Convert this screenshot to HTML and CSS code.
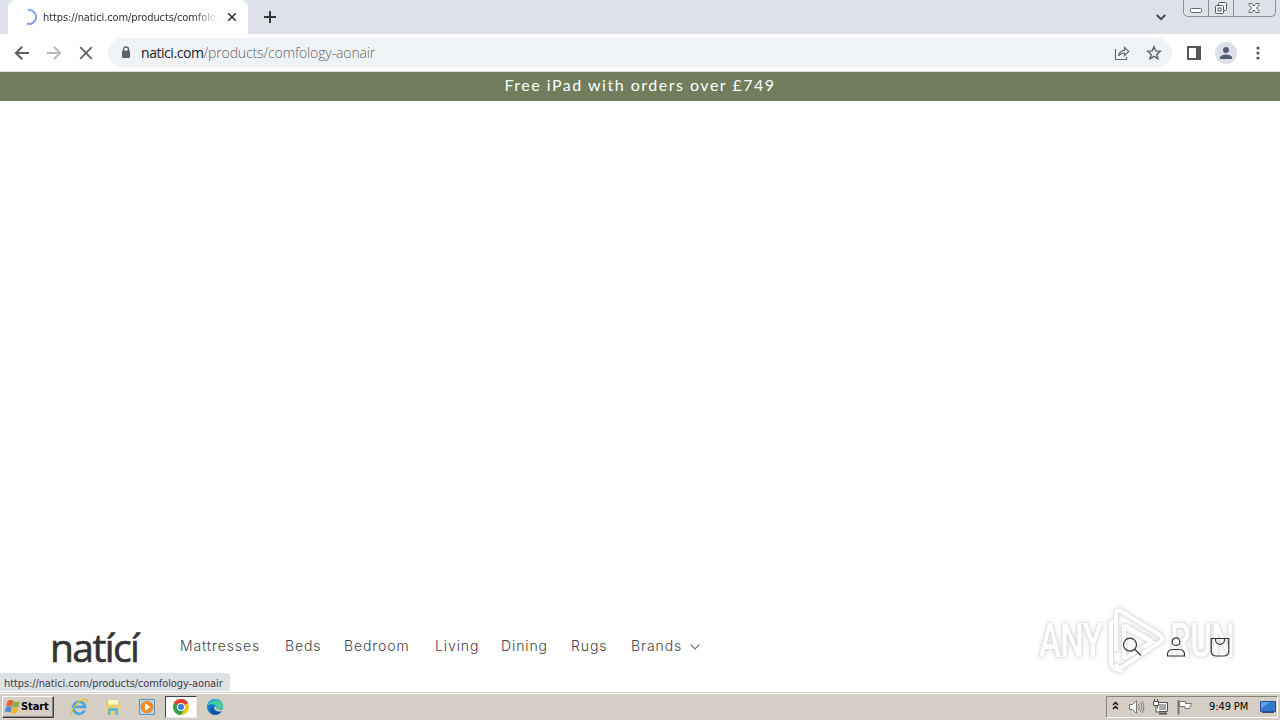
FILE: index.html
```html
<!DOCTYPE html>
<html lang="en">
<head>
  <meta charset="UTF-8">
  <title>natici.com</title>
  <link rel="stylesheet" href="styles.css">
</head>
<body>
  <div class="tab-strip">
    <div class="tab">
      <svg class="spinner" width="16" height="16" viewBox="0 0 16 16"><path d="M8 1a7 7 0 1 1-3 13.3" transform="rotate(-8 8 8)" fill="none" stroke="#7ba5e6" stroke-width="2"/></svg>
      <span class="tab-title">https://natici.com/products/comfology-aonair</span>
      <svg class="tab-close" width="10" height="10" viewBox="0 0 10 10"><path d="M1.2 1.2l7.6 7.6M8.8 1.2L1.2 8.8" stroke="#333539" stroke-width="1.600"/></svg>
    </div>
    <svg class="new-tab" width="12" height="12" viewBox="0 0 12 12"><path d="M6 0v12M0 6h12" stroke="#333539" stroke-width="2"/></svg>
    <svg class="tab-search" width="10" height="7" viewBox="0 0 10 7"><path d="M.8 1L5 5.2 9.2 1" fill="none" stroke="#45484d" stroke-width="1.9"/></svg>
    <div class="window-buttons">
      <svg width="25" height="16" viewBox="0 0 25 16"><rect x="6.500" y="8.500" width="11" height="4" rx="1" fill="#fff" stroke="#62666e"/></svg>
      <svg width="25" height="16" viewBox="0 0 25 16"><g fill="#fff" stroke="#555961"><rect x="9.500" y="2.500" width="8" height="8" rx="1"/><rect x="6.500" y="5.500" width="8" height="8" rx="1"/><rect x="9" y="8" width="3" height="3"/></g></svg>
      <svg width="41" height="16" viewBox="0 0 41 16"><path d="M15 3.500h3l2 2.500 2-2.500h3v1.500L22.500 8l2.500 3v1.500h-3L20 10l-2 2.500h-3V11l2.500-3L15 5z" fill="#fff" stroke="#62666e"/></svg>
    </div>
  </div>

  <div class="toolbar">
    <svg class="nav-icon" width="16" height="16" viewBox="0 0 16 16"><path d="M15 8H2M8.200 1.700L1.900 8l6.300 6.300" fill="none" stroke="#5a5d61" stroke-width="2"/></svg>
    <svg class="nav-icon" width="16" height="16" viewBox="0 0 16 16"><path d="M1 8h13M7.800 1.700L14.100 8l-6.300 6.300" fill="none" stroke="#b9bbbe" stroke-width="2"/></svg>
    <svg class="nav-icon" width="16" height="16" viewBox="0 0 16 16"><path d="M2.200 2.200l11.600 11.600M13.800 2.200L2.200 13.800" stroke="#5f6368" stroke-width="1.800"/></svg>
    <div class="address">
      <svg class="lock" width="10" height="13" viewBox="0 0 10 13"><path d="M2.500 5V3.500a2.500 2.500 0 0 1 5 0V5" fill="none" stroke="#5f6368" stroke-width="1.400"/><rect x="1" y="4.500" width="8" height="7.500" rx="1" fill="#5f6368"/></svg>
      <span class="url"><b>natici.com</b>/products/comfology-aonair</span>
      <svg class="share" width="16" height="16" viewBox="0 0 16 16"><path d="M1.500 4v10.500h11V12M4.500 11c.5-3.500 2.500-5.500 6-5.700V2.500l4.300 4-4.300 4V8C8 8 6 9 4.500 11z" fill="none" stroke="#686b70" stroke-width="1.200"/></svg>
      <svg class="star" width="16" height="16" viewBox="0 0 16 16"><path d="M8 1.800l1.800 4.100 4.500.4-3.400 3 1 4.400L8 11.400l-3.900 2.300 1-4.400-3.400-3 4.500-.4z" fill="none" stroke="#5f6368" stroke-width="1.500"/></svg>
    </div>
    <svg class="side-panel" width="14" height="14" viewBox="0 0 14 14"><path d="M1 1h12v12H1z" fill="none" stroke="#54575c" stroke-width="2"/><path d="M9 1h5v12H9z" fill="#54575c"/></svg>
    <svg class="profile" width="22" height="22" viewBox="0 0 22 22"><circle cx="11" cy="11" r="11" fill="#dde1e7"/><circle cx="11" cy="8" r="3" fill="#535d77"/><path d="M5 17v-1.500c0-2 4-3 6-3s6 1 6 3V17z" fill="#535d77"/></svg>
    <svg class="more" width="4" height="14" viewBox="0 0 4 14"><g fill="#54575c"><circle cx="2" cy="2" r="1.600"/><circle cx="2" cy="7" r="1.600"/><circle cx="2" cy="12" r="1.600"/></g></svg>
  </div>

  <div class="banner">Free iPad with orders over £749</div>

  <div class="page">
    <div class="header">
      <span class="logo">natící</span>
      <div class="menu">
        <span class="m1">Mattresses</span>
        <span class="m2">Beds</span>
        <span class="m3">Bedroom</span>
        <span class="m4">Living</span>
        <span class="m5">Dining</span>
        <span class="m6">Rugs</span>
        <span class="m7">Brands</span>
        <svg width="10" height="6" viewBox="0 0 10 6"><path d="M.7.7L5 5 9.300.7" fill="none" stroke="#6b6b6b" stroke-width="1.200"/></svg>
      </div>
      <div class="header-icons">
        <svg width="20" height="20" viewBox="0 0 20 20"><circle cx="8" cy="7.700" r="6.500"/><path d="M12.800 12.500l6.200 6"/></svg>
        <svg width="20" height="20" viewBox="0 0 20 20"><circle cx="10" cy="4.700" r="3.800"/><path d="M1.500 19c-.6-4.500 1.500-6.500 5.500-6.500h6c4 0 6.100 2 5.500 6.500z"/></svg>
        <svg width="20" height="20" viewBox="0 0 20 20"><path d="M1.200 1.500h17.600v13a4.500 4.500 0 0 1-4.500 4.500H5.700a4.500 4.500 0 0 1-4.500-4.500zM5.600 1.500V3a4.400 4.400 0 0 0 8.800 0V1.500"/></svg>
      </div>
    </div>
    <div class="watermark">
      <span class="wm-any">ANY</span>
      <svg width="62" height="68" viewBox="0 0 62 68"><path d="M12 44V7q0-5 5-3l39 24q4 4 0 7L18 60q-5 2-6-3"/><path d="M12 13l-5 3v40q0 4 4 6l8 2"/><path d="M20 52V20l28 15-28 17M20 18l28 16"/></svg>
      <span class="wm-run">RUN</span>
    </div>
    <div class="status">https://natici.com/products/comfology-aonair</div>
  </div>

  <div class="taskbar">
    <div class="start">
      <svg width="17" height="16" viewBox="0 0 17 16"><path d="M3.500 2q3-2 6 0L8.200 7.500q-3-1.700-6 0z" fill="#e66232"/><path d="M9.800 2.300q3 1.500 6 0L14.500 8q-3 1.500-6 0z" fill="#7fb63d"/><path d="M2 8q3-1.700 6 0L6.500 13.500q-3-1.700-6 0z" fill="#4a8ed6"/><path d="M8.300 8.500q3 1.500 6 0l-1.500 5.500q-3 1.500-6 0z" fill="#f3b52c"/></svg>
      <span>Start</span>
    </div>
    <div class="launch">
      <svg width="18" height="18" viewBox="0 0 18 18"><path d="M14.500 12.500a6 6 0 1 1 .6-3.500H4" fill="none" stroke="#44a8df" stroke-width="2.700"/><path d="M2 16.500C-1 14 10-1 16 1.500c1 .5 1 1.500.3 3" fill="none" stroke="#e9bd36" stroke-width="1.500"/></svg>
      <svg width="18" height="18" viewBox="0 0 18 18"><path d="M2 3h5l1 2h7v11H2z" fill="#e3c466"/><path d="M4 2h10v6H4z" fill="#fff5bd"/><path d="M1.500 6.500h15V16h-15z" fill="#e8cf78"/><path d="M4 17v-5q0-2 2-2h6q2 0 2 2v5h-2.500v-4h-5v4z" fill="#62b4d8"/></svg>
      <svg width="18" height="18" viewBox="0 0 18 18"><path d="M1.500 1.500h15v15h-15z" fill="#b6d6ee" stroke="#5f93bf"/><circle cx="9" cy="9" r="6.300" fill="#f18b22"/><path d="M7 5.200l5.500 3.800L7 12.800z" fill="#fff"/></svg>
      <div class="running">
        <svg width="16" height="16" viewBox="0 0 16 16"><circle cx="8" cy="8" r="8" fill="#f6c51c"/><path d="M8 8L1.100 4a8 8 0 0 1 13.800 0z" fill="#de4031"/><path d="M1.100 4A8 8 0 0 0 8 16l3.500-6z" fill="#2ba24c"/><path d="M1.100 4H8v4L4.500 10z" fill="#2ba24c"/><path d="M1.100 4a8 8 0 0 1 13.800 0H8a4 4 0 0 0-3.500 2z" fill="#de4031"/><circle cx="8" cy="8" r="4" fill="#fff"/><circle cx="8" cy="8" r="3" fill="#3b79e1"/></svg>
      </div>
      <svg width="18" height="18" viewBox="0 0 18 18"><circle cx="9" cy="9" r="8" fill="#157bce"/><path d="M1.200 8C2 3.500 5 1 9 1c5 0 8 3.500 8 7 0 3-2 4-4 4s-3.500-1-2.500-2.500C11 6.500 5 4.500 1.200 8z" fill="#44cba0"/><path d="M1.200 8C2 3.500 5 1 9 1c2.500 0 4.500 1 6 2.500C10 1 5 3 1.200 8z" fill="#2cabdf"/><path d="M7 8c-1 4 3 7 8.500 5-3 5-10 5-11 0C4 11 5.500 9 7 8z" fill="#12529f"/><path d="M9.500 8.500c-1 3 2 5 7.500 3.500" fill="none" stroke="#d5cec5" stroke-width="1.800"/></svg>
    </div>
    <div class="tray">
      <svg class="expand" width="7" height="9" viewBox="0 0 7 9"><path d="M1 4l2.500-2.500L6 4M1 8l2.500-2.500L6 8" fill="none" stroke="#000" stroke-width="1.400"/></svg>
      <svg width="17" height="16" viewBox="0 0 17 16"><path d="M1.500 5.500h3l4-4v13l-4-4h-3z" fill="#fff" stroke="#777"/><path d="M10.500 5q1.500 3 0 6M12.500 3q3 5 0 10M14.500 2q3 6 0 12" fill="none" stroke="#858585"/></svg>
      <svg width="17" height="16" viewBox="0 0 17 16"><path d="M5.500 3.500h10v9h-10z" fill="#aaa" stroke="#555"/><path d="M6.500 4.500h8v7h-8z" fill="none" stroke="#fff"/><path d="M7 14.500h8" stroke="#555" stroke-width="2"/><path d="M1.500 2.500h5v4h-5zM2.500 0v3M5.500 0v3M4 6v7h3" fill="#fff" stroke="#555"/></svg>
      <svg width="17" height="16" viewBox="0 0 17 16"><path d="M2.500 1v14.500" stroke="#777" stroke-width="2"/><path d="M3.500 2.500h6v2h6l-2 5H9v-2H3.500z" fill="#fff" stroke="#777"/></svg>
      <span class="clock">9:49 PM</span>
      <svg class="desktop" width="16" height="14" viewBox="0 0 16 14"><path d="M.5 1.500h15v10H.5z" fill="#3478cd" stroke="#24549c"/><path d="M1 2h9L1 9z" fill="#5fa1e4"/><path d="M2 12.500h12" stroke="#304c7b"/></svg>
    </div>
  </div>
</body>
</html>
```
FILE: styles.css
```css
body {
  margin: 0;
  width: 1280px;
  height: 720px;
  overflow: hidden;
  display: flex;
  flex-direction: column;
  background: white;
  font-family: "Open Sans", sans-serif;
}
svg {
  display: block;
  flex-shrink: 0;
}
.tab-strip {
  height: 34px;
  background: #dee1e8;
  display: flex;
  align-items: center;
  padding-left: 8px;
}
.tab {
  width: 240px;
  height: 34px;
  box-sizing: border-box;
  padding: 0 11px 0 13px;
  display: flex;
  align-items: center;
  background: white;
  border-radius: 8px 8px 0 0;
}
.tab-title {
  width: 175px;
  margin-left: 6px;
  overflow: hidden;
  white-space: nowrap;
  font-family: "DejaVu Sans Condensed", "DejaVu Sans", sans-serif;
  font-stretch: condensed;
  font-size: 11px;
  letter-spacing: -0.1px;
  color: #303134;
  -webkit-mask-image: linear-gradient(to right, black 150px, transparent);
}
.tab-close {
  margin-left: 9px;
}
.new-tab {
  margin-left: 16px;
}
.tab-search {
  margin-left: auto;
  margin-right: 17px;
}
.window-buttons {
  align-self: flex-start;
  display: flex;
  height: 16px;
  margin-right: 4px;
  border: 1px solid #8b8e96;
  border-top: none;
  border-radius: 0 0 5px 5px;
}
.window-buttons svg + svg {
  box-shadow: -1px 0 #8b8e96;
}
.toolbar {
  height: 37px;
  display: flex;
  align-items: center;
  padding-left: 14px;
  border-bottom: 1px solid #dcded9;
}
.nav-icon {
  margin-right: 16px;
}
.address {
  width: 1064px;
  height: 29px;
  margin-left: -2px;
  display: flex;
  align-items: center;
  box-sizing: border-box;
  padding: 0 10px 0 13px;
  background: #f0f3f6;
  border-radius: 15px;
}
.url {
  margin-left: 10px;
  font-size: 14px;
  font-weight: 300;
  letter-spacing: -0.13px;
  color: #5f6368;
}
.url b {
  font-weight: 400;
  letter-spacing: -0.45px;
  color: #202124;
}
.share {
  margin-left: auto;
}
.star {
  margin-left: 16px;
}
.side-panel {
  margin-left: 15px;
}
.profile {
  margin-left: 14px;
}
.more {
  margin-left: 19px;
}
.banner {
  height: 29px;
  line-height: 26px;
  background: #717d5d;
  color: white;
  text-align: center;
  font-family: Lato, sans-serif;
  font-size: 16px;
  letter-spacing: 1.5px;
}
.page {
  flex: 1;
  position: relative;
  display: flex;
  flex-direction: column;
  justify-content: flex-end;
}
.header {
  height: 60px;
  margin-bottom: 15px;
  padding: 0 50px;
  display: flex;
  align-items: center;
  position: relative;
  z-index: 1;
}
.logo {
  width: 130px;
  padding-bottom: 1px;
  font-size: 39px;
  font-weight: 500;
  line-height: 59px;
  letter-spacing: -1.6px;
  color: #333536;
  -webkit-text-stroke: 0.6px #333536;
}
.menu {
  display: flex;
  align-items: center;
  font-family: Inter, sans-serif;
  font-size: 14px;
  font-weight: 300;
  letter-spacing: 0.9px;
  color: #444;
}
.menu span {
  padding-bottom: 3px;
  white-space: nowrap;
}
.m1 {
  width: 105px;
}
.m2 {
  width: 59px;
}
.m3 {
  width: 91px;
}
.m4 {
  width: 66px;
}
.m5 {
  width: 70px;
}
.m6 {
  width: 60px;
}
.m7 {
  width: 59px;
}
.header-icons {
  margin-left: auto;
  display: flex;
  gap: 24px;
}
.header-icons svg {
  fill: none;
  stroke: #333;
  stroke-width: 1.2;
}
.watermark {
  position: absolute;
  left: 1039px;
  top: 506px;
  height: 68px;
  display: flex;
  align-items: center;
  color: white;
  font-size: 48px;
  line-height: 68px;
  filter: drop-shadow(0 0 1px #ccc) drop-shadow(0 0 2px #ddd);
}
.watermark span {
  width: 65px;
  font-family: Roboto, sans-serif;
  font-weight: 500;
  letter-spacing: -1px;
  transform: scaleX(0.69);
  transform-origin: left;
}
.watermark .wm-run {
  margin-left: 4px;
}
.watermark svg {
  fill: none;
  stroke: white;
  stroke-width: 4;
}
.status {
  position: absolute;
  left: 0;
  bottom: 1px;
  width: 230px;
  height: 18px;
  box-sizing: border-box;
  padding-left: 4px;
  line-height: 21px;
  white-space: nowrap;
  background: #dee1e6;
  border-radius: 0 4px 0 0;
  font-family: "DejaVu Sans Condensed", "DejaVu Sans", sans-serif;
  font-stretch: condensed;
  font-size: 11px;
  letter-spacing: -0.1px;
  color: #3c4043;
}
.taskbar {
  height: 28px;
  box-sizing: border-box;
  display: flex;
  align-items: center;
  padding: 1px 2px 1px;
  background: #d5cec5;
  border-top: 1px solid #d5cec5;
  box-shadow: inset 0 1px white;
}
.start {
  width: 52px;
  height: 22px;
  box-sizing: border-box;
  display: flex;
  align-items: center;
  padding-left: 1px;
  border: 1px solid;
  border-color: white #404040 #404040 white;
  box-shadow: inset -1px -1px #87827b;
  font-family: "DejaVu Sans Condensed", "DejaVu Sans", sans-serif;
  font-stretch: condensed;
  font-size: 11px;
  font-weight: bold;
  letter-spacing: -0.1px;
}
.launch {
  display: flex;
  align-items: center;
  margin-left: 16px;
  gap: 16px;
}
.launch .running {
  width: 32px;
  height: 22px;
  box-sizing: border-box;
  margin: 0 -7px;
  padding: 2px 7px;
  background: white;
  border: 1px solid;
  border-color: #404040 #eee #eee #404040;
}
.tray {
  width: 172px;
  height: 22px;
  box-sizing: border-box;
  margin-left: auto;
  display: flex;
  align-items: center;
  padding-left: 5px;
  border: 1px solid;
  border-color: #87827b white white #87827b;
}
.expand {
  margin-right: 9px;
  margin-bottom: 2px;
}
.expand ~ svg {
  margin-right: 7px;
}
.clock {
  width: 42px;
  margin-left: 9px;
  white-space: nowrap;
  font-family: "DejaVu Sans Condensed", "DejaVu Sans", sans-serif;
  font-stretch: condensed;
  font-size: 11px;
  letter-spacing: -0.1px;
}
.tray .desktop {
  margin-left: 9px;
  margin-right: 0;
}
```
